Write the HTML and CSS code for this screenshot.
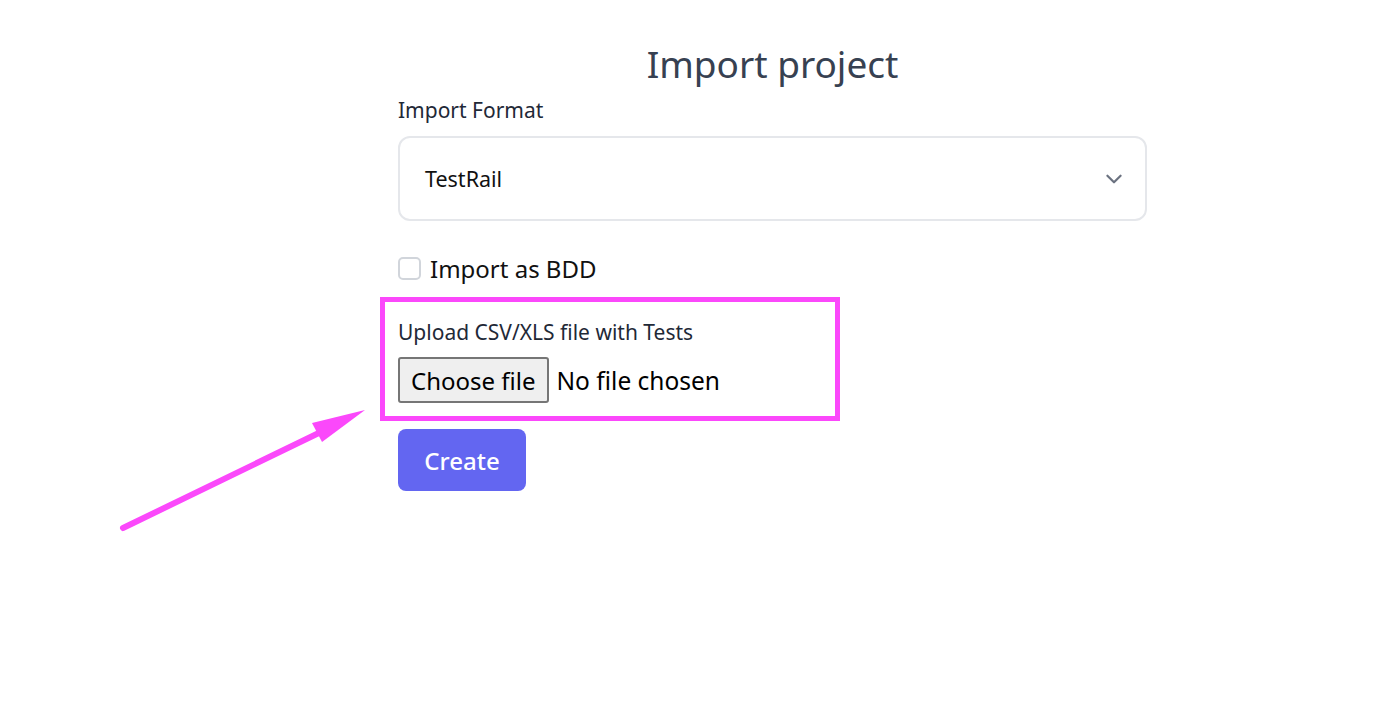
FILE: index.html
```html
<!DOCTYPE html>
<html lang="en">
<head>
<meta charset="utf-8">
<title>Import project</title>
<link rel="stylesheet" href="styles.css">
</head>
<body>
<main class="page">
  <section class="form">
    <h1 class="title">Import project</h1>
    <label class="label">Import Format</label>
    <div class="select">
      <span class="select-value">TestRail</span>
      <svg class="chevron" width="22" height="22" viewBox="0 0 20 20"><path d="M4 7l6 6 6-6" fill="none" stroke="#6b7280" stroke-width="2" stroke-linecap="round" stroke-linejoin="round"/></svg>
    </div>
    <div class="check-row">
      <span class="checkbox"></span>
      <span class="check-label">Import as BDD</span>
    </div>
    <div class="upload">
      <label class="label">Upload CSV/XLS file with Tests</label>
      <div class="file-row">
        <span class="file-btn">Choose file</span>
        <span class="file-name">No file chosen</span>
      </div>
      <div class="highlight"></div>
    </div>
    <button class="create">Create</button>
  </section>
  <svg class="arrow" width="400" height="200" viewBox="0 0 400 200">
    <line x1="23" y1="133" x2="225" y2="35" stroke="#fb48fb" stroke-width="6" stroke-linecap="round"/>
    <polygon points="265,15 212,28 222,47" fill="#fb48fb"/>
  </svg>
</main>
</body>
</html>
```
FILE: styles.css
```css
html, body {
  margin: 0;
  padding: 0;
  background: #ffffff;
}
body {
  font-family: "Noto Sans", "Open Sans", sans-serif;
  color: #1f2937;
}
.page {
  position: relative;
  width: 1382px;
  height: 712px;
}
.form {
  display: flex;
  flex-direction: column;
  align-items: flex-start;
  width: 749px;
  margin-left: 398px;
  padding-top: 38px;
}
.title {
  align-self: stretch;
  margin: 0;
  text-align: center;
  font-size: 37px;
  line-height: 52px;
  font-weight: 400;
  color: #374151;
}
.label {
  display: block;
  font-size: 21px;
  line-height: 28px;
  color: #1f2937;
}
.form > .label {
  margin-top: 6px;
}
.select {
  box-sizing: border-box;
  align-self: stretch;
  height: 85px;
  margin-top: 12px;
  border: 2px solid #e5e7eb;
  border-radius: 12px;
  display: flex;
  align-items: center;
  justify-content: space-between;
  padding: 0 20px 0 25px;
}
.select-value {
  font-size: 21.5px;
  color: #111111;
}
.chevron {
  display: block;
}
.check-row {
  display: flex;
  align-items: center;
  gap: 9px;
  margin-top: 35px;
  height: 24px;
}
.checkbox {
  box-sizing: border-box;
  width: 23px;
  height: 23px;
  border: 2px solid #d1d5db;
  border-radius: 5px;
}
.check-label {
  font-size: 24px;
  color: #111111;
}
.upload {
  position: relative;
  margin-top: 38px;
}
.file-row {
  display: flex;
  align-items: center;
  gap: 8px;
  margin-top: 11px;
}
.file-btn {
  box-sizing: border-box;
  height: 46px;
  padding: 0 11px;
  display: flex;
  align-items: center;
  background: #efefef;
  border: 2px solid #767676;
  border-radius: 3px;
  font-size: 24px;
  color: #000000;
}
.file-name {
  font-size: 24.5px;
  color: #000000;
}
.highlight {
  position: absolute;
  left: -18px;
  top: -21px;
  width: 460px;
  height: 124px;
  box-sizing: border-box;
  border: 5px solid #fb48fb;
}
.create {
  margin-top: 26px;
  height: 62px;
  width: 128px;
  border: none;
  border-radius: 8px;
  background: #6366f1;
  color: #ffffff;
  font-family: inherit;
  font-size: 24px;
  font-weight: 500;
  padding: 0;
}
.arrow {
  position: absolute;
  left: 100px;
  top: 395px;
}
```
